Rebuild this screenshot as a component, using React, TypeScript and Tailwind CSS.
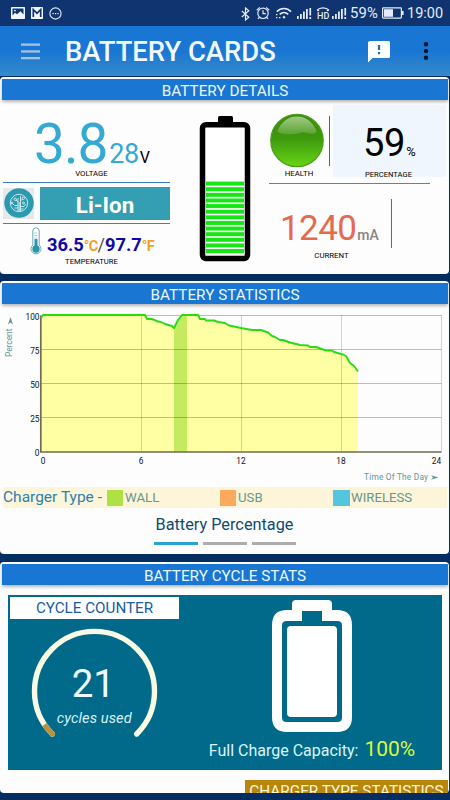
import React from 'react'

const CURVE =
    '41,318 43,315 145,315 147,319 152,319 158,321.5 161,322 165,324 172,326 174,328 178,320 182,315 198,315 200,319 205,319 206,320.5 214,320.5 218,322 225,323 229,325.5 241,328 252,330 261,330 268,332.5 272,336 275,337 280,340 283,340 290,342.5 300,345 308,345.5 310,347 316,347 326,350.5 332,350.5 334,352 343,354.5 346,356 350,363 354,366 358,371.5'

interface CardProps {
    title: string
    className: string
    children: React.ReactNode
}

function Card({ title, className, children }: CardProps) {
    return (
        <section className={`flex w-[449px] flex-col rounded-[4px] bg-[#fdfdfe] ${className}`}>
            <div className="mx-[2px] mt-[2px] h-[21px] w-[446px] shrink-0 bg-[#1976d2] text-center text-[15.3px] leading-[24px] text-[#e9f8ff] shadow-[0_2px_3px_rgba(0,0,0,0.28)]">
                {title}
            </div>
            {children}
        </section>
    )
}

function Signal({ className }: { className: string }) {
    return (
        <svg className={className} width="15" height="13" viewBox="0 0 15 13" fill="#e4ebf8">
            <rect x="0" y="9" width="1.7" height="3" />
            <rect x="3" y="7" width="1.8" height="5" />
            <rect x="6" y="4.5" width="1.8" height="7.5" />
            <rect x="9" y="2" width="1.8" height="10" />
            <rect x="12.4" y="1" width="1.7" height="7.5" />
            <rect x="12.4" y="10" width="1.7" height="2" />
        </svg>
    )
}

function StatusBar() {
    return (
        <div className="flex h-[26px] items-center bg-[#0f3470] pl-[11px] text-[#e4ebf8]">
            <svg width="14" height="12" viewBox="0 0 14 12">
                <rect width="14" height="12" rx="0.8" fill="#f2f6fd" />
                <path d="M1.5 1.5h11v6l-3-3.2-3.5 3-2-1.5-2.5 2.6z" fill="#0f3470" />
                <circle cx="4" cy="3.6" r="0.9" fill="#f2f6fd" />
            </svg>
            <svg className="ml-[6px]" width="12" height="12" viewBox="0 0 12 12">
                <rect width="12" height="12" rx="0.8" fill="#f2f6fd" />
                <path d="M2.3 10V2.5L6 6.3l3.7-3.8V10" fill="none" stroke="#0f3470" strokeWidth="1.7" />
            </svg>
            <svg className="ml-[6px]" width="13" height="13" viewBox="0 0 13 13">
                <circle cx="6.5" cy="6.5" r="5.6" fill="none" stroke="#e4ebf8" strokeWidth="1.1" />
                <path d="M3.4 6.6h1.3M5.9 6.6h1.3M8.4 6.6h1.3" stroke="#e4ebf8" strokeWidth="1.3" />
            </svg>

            <svg className="ml-[179px] mt-px" width="9" height="14" viewBox="0 0 9 14" fill="none" stroke="#e4ebf8" strokeWidth="1.2">
                <path d="M0.8 4l7 6.2L4.5 13V1l3.3 2.8-7 6.2" />
            </svg>
            <svg className="ml-[6px]" width="14" height="14" viewBox="0 0 14 14" fill="none" stroke="#e4ebf8" strokeWidth="1.2">
                <circle cx="7" cy="7.3" r="5.2" />
                <path d="M7 4.2v3.4h2.8M0.8 4.2l3-2.8M13.2 4.2l-3-2.8M3.2 11.5l-1.2 1.3M10.8 11.5l1.2 1.3" />
            </svg>
            <svg className="ml-[5px]" width="17" height="14" viewBox="0 0 17 14" fill="none" stroke="#e4ebf8" strokeWidth="1.6">
                <path d="M1.8 5.6c4-4.2 10.2-4.2 14.2 0M4.7 8.4c2.5-2.4 6-2.4 8.5 0" />
                <circle cx="9" cy="11.2" r="1" fill="#e4ebf8" strokeWidth="0.6" />
                <path d="M1 8.6h1.4M1 11.6h1.4M4 11.6h1.4" strokeWidth="1.3" />
            </svg>
            <Signal className="ml-[5px]" />
            <svg className="ml-[4px]" width="14" height="14" viewBox="0 0 14 14" fill="none" stroke="#e4ebf8" strokeWidth="1.2">
                <path d="M1 4.2c2.8-3.2 9.2-3.2 12 0M1 4.3l2.2.3M13 4.3l-2.2.3" />
                <text x="1" y="12.6" fontSize="9" fontWeight="500" fill="#e4ebf8" stroke="none">HD</text>
            </svg>
            <Signal className="ml-[2px]" />
            <span className="ml-[3px] mt-px w-[30px] text-[14.8px] tracking-[0.2px]">59%</span>
            <svg className="ml-[2px]" width="22" height="12" viewBox="0 0 22 12">
                <rect x="0.6" y="0.9" width="18.8" height="10.2" rx="0.8" fill="none" stroke="#e4ebf8" strokeWidth="1.2" />
                <rect x="2" y="2.2" width="9" height="7.6" fill="#e4ebf8" />
                <rect x="20" y="4" width="1.6" height="4" fill="#e4ebf8" />
            </svg>
            <span className="ml-[3px] mt-[2px] text-[14.5px]">19:00</span>
        </div>
    )
}

function AppBar() {
    return (
        <header className="flex h-[50px] items-center bg-gradient-to-b from-[#1976d2] from-50% to-[#348acb] pl-[21px]">
            <svg width="19" height="17" viewBox="0 0 19 17" fill="#a5c3e0">
                <rect y="0.5" width="19" height="2.3" />
                <rect y="7.3" width="19" height="2.3" />
                <rect y="14" width="19" height="2.3" />
            </svg>
            <h1 className="ml-[25px] mt-[2px] w-[303px] text-[27.4px] font-medium leading-[50px] text-[#f0faff]">BATTERY CARDS</h1>
            <svg width="23" height="23" viewBox="0 0 23 23">
                <path d="M2.5 1h18Q22 1 22 2.5v14Q22 18 20.5 18H4.5L0 22.5V2.5Q0 1 2.5 1z" fill="#fff" />
                <path d="M11 5v5M11 12v2.2" stroke="#1c70b8" strokeWidth="2.2" />
            </svg>
            <svg className="ml-[32px]" width="6" height="20" viewBox="0 0 6 20" fill="#0b1726">
                <circle cx="3" cy="3.2" r="2.2" />
                <circle cx="3" cy="10" r="2.2" />
                <circle cx="3" cy="16.8" r="2.2" />
            </svg>
        </header>
    )
}

function BatteryLevel() {
    return (
        <svg className="ml-[28px] mt-[15px] shrink-0" width="54" height="150" viewBox="198 115 54 150">
            <rect x="218" y="116" width="15" height="8" rx="1.5" />
            <rect x="202.5" y="124.7" width="45" height="133.8" rx="3.5" fill="#fff" stroke="#000" strokeWidth="5.5" />
            {Array.from({ length: 13 }, (_, i) => (
                <rect key={i} x="206" y={181.6 + i * 5.62} width="38" height="4" fill="#16e616" />
            ))}
        </svg>
    )
}

function LeftDetails() {
    return (
        <div className="ml-[3px] flex w-[167px] flex-col">
            <div className="flex h-[67px] items-baseline pl-[31px] pt-[17px] text-[#33a9d3]">
                <span className="text-[55px] leading-[54px] tracking-[-1px]">3.8</span>
                <span className="ml-[2px] text-[27px] leading-none tracking-[-0.5px]">28</span>
                <span className="ml-px text-[16px] leading-none text-black">V</span>
            </div>
            <div className="h-[15px] pl-[10px] text-center text-[7.8px] leading-[14px] text-black">VOLTAGE</div>
            <div className="flex h-[42px] items-center justify-between border-y border-[#3c7fb9]">
                <div className="flex h-[31px] w-[31px] items-center justify-center bg-[#e6e9e9]">
                    <svg width="30" height="30" viewBox="0 0 30 30">
                        <circle cx="15" cy="15" r="14.7" fill="#2b9ab0" />
                        <g fill="none" stroke="#d8eff2" strokeWidth="0.9">
                            <circle cx="15" cy="15" r="8.7" />
                            <path d="M14 23V10M16.5 23V8M15.2 23v-9M14 17.5H10.5L8.5 15.5M14 14l-2-2M16.5 18.5H20L22 16M16.5 13l2-2M14 20h-3.5M16.5 21h3" />
                            <circle cx="11.2" cy="11.3" r="1.2" />
                            <circle cx="19.3" cy="10.3" r="1.2" />
                            <circle cx="19.5" cy="15" r="1" />
                            <circle cx="8" cy="15" r="0.9" />
                        </g>
                    </svg>
                </div>
                <div className="h-[33px] w-[130px] bg-[#349eb2] text-center text-[22.3px] font-bold leading-[36px] text-white">Li-Ion</div>
            </div>
            <div className="flex h-[31px] items-start pl-[27px] pt-[3px]">
                <svg className="shrink-0" width="12" height="28" viewBox="0 0 12 28">
                    <path d="M2.8 18V4a3.2 3.2 0 0 1 6.4 0v14a5 5 0 1 1-6.4 0z" fill="#fff" stroke="#6aa9b6" strokeWidth="1" />
                    <circle cx="6" cy="22" r="3.7" fill="#2996aa" />
                    <rect x="4.5" y="12" width="3" height="9" fill="#2996aa" />
                    <path d="M4 6h3M4 8.5h3M4 11h3" stroke="#7db3bd" strokeWidth="0.6" />
                </svg>
                <div className="ml-[5px] mt-[8px] flex items-baseline text-[18.3px] font-bold leading-[20px] text-[#1008a8]">
                    <span>36.5</span>
                    <span className="text-[14.5px] leading-none tracking-[-0.7px] text-[#eda31b]">°C</span>
                    <span className="font-normal text-[#555]">/</span>
                    <span>97.7</span>
                    <span className="text-[14.5px] leading-none tracking-[-0.7px] text-[#eda31b]">°F</span>
                </div>
            </div>
            <div className="h-[14px] pl-[10px] text-center text-[7.7px] leading-[14px] text-black">TEMPERATURE</div>
        </div>
    )
}

function RightDetails() {
    return (
        <div className="ml-[17px] flex w-[178px] flex-col">
            <div className="flex h-[83px]">
                <div className="flex w-[60px] flex-col pt-[13px]">
                    <svg width="56" height="55" viewBox="0 0 56 56">
                        <defs>
                            <linearGradient id="orb" x2="0" y2="1">
                                <stop offset="0" stopColor="#3f8a10" />
                                <stop offset="0.45" stopColor="#3d980d" />
                                <stop offset="1" stopColor="#67d616" />
                            </linearGradient>
                            <linearGradient id="gloss" x2="0" y2="1">
                                <stop offset="0" stopColor="#a2ca85" />
                                <stop offset="1" stopColor="#5aa431" />
                            </linearGradient>
                        </defs>
                        <circle cx="28" cy="28" r="26.7" fill="url(#orb)" stroke="#4a9f1a" strokeWidth="1.3" />
                        <path d="M8 19C12 8 20 3.5 28 3.5S44 8 48 19c-5 5-10-1-17 1s-16 3-23-1z" fill="url(#gloss)" />
                    </svg>
                    <div className="mt-px w-[60px] text-center text-[7.8px] leading-[10px] text-black">HEALTH</div>
                </div>
                <div className="mt-[16px] h-[50px] w-px bg-[#2b70b5]" />
                <div className="ml-[3px] mt-[5px] flex h-[72px] w-[113px] flex-col bg-[#f0f6fd] text-black">
                    <div className="flex h-[65px] shrink-0 items-baseline pl-[30px] pt-[19px]">
                        <span className="text-[38px] leading-[38px] tracking-[-0.3px]">59</span>
                        <span className="ml-px text-[13px] leading-none">%</span>
                    </div>
                    <div className="pl-[32px] text-[7.6px] leading-[10px]">PERCENTAGE</div>
                </div>
            </div>
            <div className="h-px w-[161px] bg-[#4d86b8]" />
            <div className="flex h-[90px]">
                <div className="flex w-[122px] flex-col">
                    <div className="flex h-[67px] items-baseline pl-[11px] pt-[27px]">
                        <span className="text-[35px] leading-[35px] tracking-[-0.6px] text-[#e5694d]">1240</span>
                        <span className="ml-px text-[14px] font-medium leading-none text-[#858585]">mA</span>
                    </div>
                    <div className="pl-[3px] text-center text-[7.8px] leading-[10px] text-black">CURRENT</div>
                </div>
                <div className="mt-[15px] h-[49px] w-px bg-[#2b7abd]" />
            </div>
        </div>
    )
}

function HistoryChart() {
    return (
        <svg className="shrink-0" width="449" height="183" viewBox="0 304 449 183">
            <polygon points={`41,452 ${CURVE} 358,452`} fill="#ffffa3" />
            <polygon points="174,452 174,328 178,320 182,315 187,315 187,452" fill="#c5ea5f" />
            <g stroke="#000" strokeOpacity="0.25" strokeWidth="1">
                <path d="M41 315.5H441.5M41 349.5H441.5M41 383.5H441.5M41 417.5H441.5" />
                <path d="M141.5 315V451M241.5 315V451M341.5 315V451M441.5 315V451" strokeOpacity="0.17" />
            </g>
            <path d="M40.8 315.5V452H441.5" fill="none" stroke="#6e6c52" strokeWidth="1.7" />
            <polyline points={CURVE} fill="none" stroke="#28dc14" strokeWidth="1.9" strokeLinejoin="round" />
            <g fontSize="8.3" fill="#111" textAnchor="end">
                <text x="39.5" y="319.5">100</text>
                <text x="39.5" y="353.8">75</text>
                <text x="39.5" y="387.8">50</text>
                <text x="39.5" y="421.8">25</text>
                <text x="39.5" y="456">0</text>
            </g>
            <g fontSize="8.3" fill="#111" textAnchor="middle">
                <text x="43" y="464">0</text>
                <text x="141" y="464">6</text>
                <text x="241" y="464">12</text>
                <text x="341" y="464">18</text>
                <text x="436.5" y="464">24</text>
            </g>
            <g fill="#5f9899">
                <text transform="rotate(-90 12 357)" x="12" y="357" fontSize="8.5" textLength="28.5">Percent</text>
                <path d="M10.5 317l-2.5 7.5 2.5-2 2.5 2z" />
                <text x="364" y="480" fontSize="8.3" textLength="64">Time Of The Day</text>
                <path d="M438.5 477.5l-7.5-2.3 2 2.3-2 2.3z" />
            </g>
        </svg>
    )
}

function ChargerLegend() {
    return (
        <div className="ml-[3px] flex h-[21px] w-[444px] shrink-0 items-center bg-[#fcf5da] text-[13.2px] leading-[23px] text-[#66988c]">
            <span className="w-[104px] text-[15.5px] text-[#2d81ae]">Charger Type -</span>
            <span className="h-4 w-4 bg-[#aee143]" />
            <span className="ml-[2px] w-[95px]">WALL</span>
            <span className="h-4 w-4 bg-[#fba95c]" />
            <span className="ml-[2px] w-[95px]">USB</span>
            <span className="h-4 w-[17px] bg-[#53c5dc]" />
            <span className="ml-px">WIRELESS</span>
        </div>
    )
}

function CycleGauge() {
    return (
        <svg className="ml-[20px] mt-[6px]" width="130" height="120" viewBox="30 625 130 120" fill="none" strokeLinecap="round">
            <path d="M52.3 734A60 60 0 1 1 136.7 734" stroke="#f8fae4" strokeWidth="5.4" />
            <path d="M52.3 734A60 60 0 0 1 44.5 724.5" stroke="#b8933f" strokeWidth="5.4" strokeLinecap="butt" />
            <circle cx="52.3" cy="734" r="2.7" fill="#b8933f" />
            <text x="93.3" y="697" fontSize="38.5" textAnchor="middle" fill="#eefaff">21</text>
            <text x="94.2" y="723" fontSize="14.6" fontStyle="italic" textAnchor="middle" fill="#d8f0f4" textLength="75">cycles used</text>
        </svg>
    )
}

function CapacityIcon() {
    return (
        <svg width="80" height="132" viewBox="272 600 80 132">
            <path d="M296 600h32q4 0 4 4v6h5q15 0 15 15v92q0 15-15 15h-50q-15 0-15-15v-92q0-15 15-15h5v-6q0-4 4-4z" fill="#fff" />
            <path d="M302 611h20v10h15.5q4.5 0 4.5 4.5v92q0 4.5-4.5 4.5h-51q-4.5 0-4.5-4.5v-92q0-4.5 4.5-4.5H302z" fill="#016a8a" />
            <rect x="287" y="626" width="50" height="91" rx="4" fill="#fff" />
        </svg>
    )
}

export default function App() {
    return (
        <main className="flex h-[800px] w-[450px] flex-col overflow-hidden bg-[#042d62] font-[Roboto,sans-serif]">
            <StatusBar />
            <AppBar />

            <Card title="BATTERY DETAILS" className="mt-px h-[197px] shrink-0">
                <div className="flex">
                    <LeftDetails />
                    <BatteryLevel />
                    <RightDetails />
                </div>
            </Card>

            <Card title="BATTERY STATISTICS" className="mt-[7px] h-[273px] shrink-0">
                <HistoryChart />
                <ChargerLegend />
                <div className="mt-[5px] h-[22px] text-center text-[16.3px] leading-[24px] text-[#0f4a70]">Battery Percentage</div>
                <div className="mt-[7px] flex justify-center gap-[5px]">
                    <span className="h-[3px] w-[44px] bg-[#29a3cf]" />
                    <span className="h-[3px] w-[44px] bg-[#adadad]" />
                    <span className="h-[3px] w-[44px] bg-[#adadad]" />
                </div>
            </Card>

            <Card title="BATTERY CYCLE STATS" className="mt-[8px] h-[231px] shrink-0 overflow-hidden">
                <div className="ml-[8px] mt-[10px] flex h-[175px] w-[434px] shrink-0 bg-[#016a8a]">
                    <div className="flex w-[190px] flex-col pl-[2px] pt-[2px]">
                        <div className="h-[22px] w-[169px] bg-white text-center text-[15.2px] leading-[23px] text-[#175da3]">CYCLE COUNTER</div>
                        <CycleGauge />
                    </div>
                    <div className="flex w-[228px] flex-col items-center pt-[5px]">
                        <CapacityIcon />
                        <div className="mt-[4px] flex items-baseline gap-[6px] whitespace-nowrap text-[#d9f5fa]">
                            <span className="text-[16px] leading-[26px]">Full Charge Capacity:</span>
                            <span className="text-[21px] leading-[26px] text-[#dcf73a]">100%</span>
                        </div>
                    </div>
                </div>
                <div className="ml-[245px] mt-[10px] flex h-[22px] w-[203px] shrink-0 justify-center whitespace-nowrap bg-[#b8860b] text-[15.3px] leading-[22px] text-[#fbf6dc]">
                    CHARGER TYPE STATISTICS
                </div>
            </Card>
        </main>
    )
}
